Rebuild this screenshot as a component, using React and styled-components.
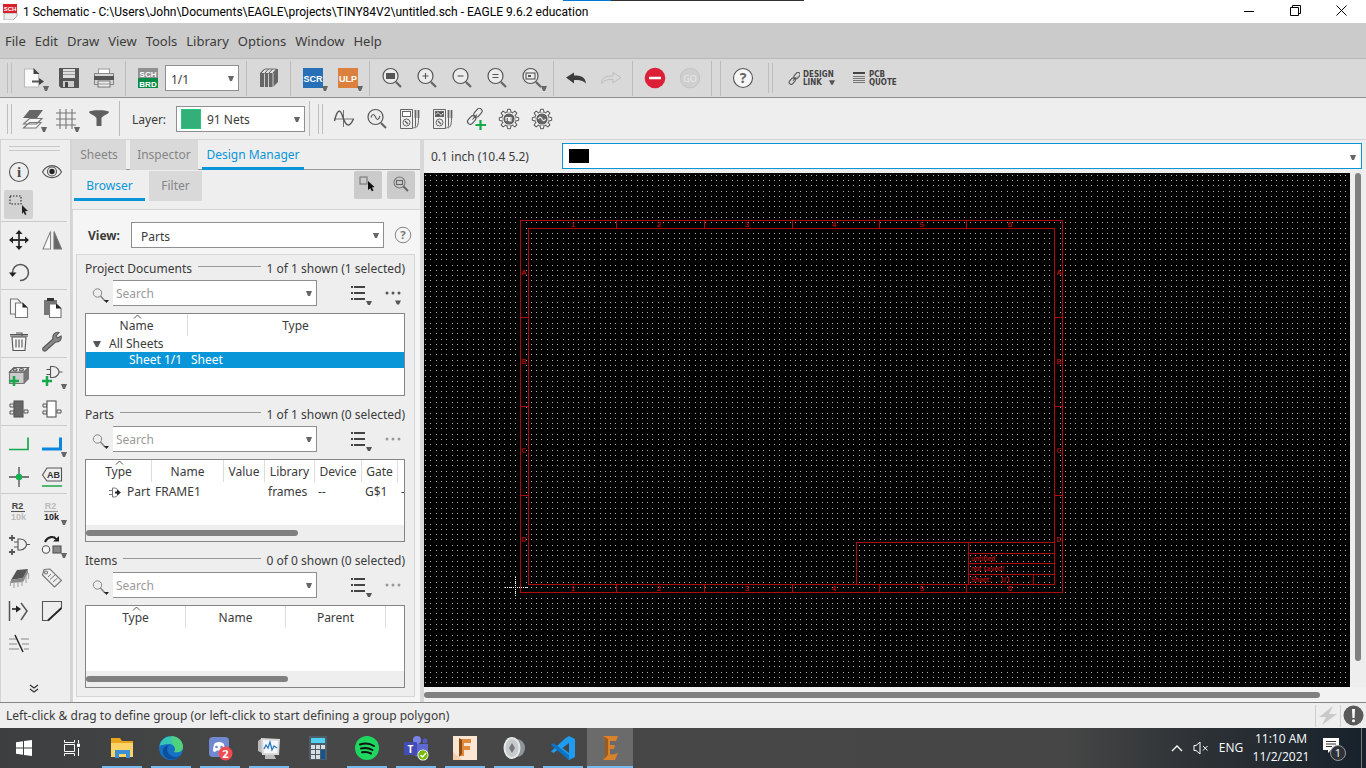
import React from "react";
import styled, { createGlobalStyle, css } from "styled-components";

const UI = `"Noto Sans", "Open Sans", sans-serif`;
const SMALL = "Liberation Sans, sans-serif";
const BLUE = "#0996d9";

const Global = createGlobalStyle`
  * { box-sizing: border-box; }
  body { margin: 0; font-family: ${UI}; font-size: 12px; color: #3b3b3b; background: #eee; overflow: hidden; }
  button, input, select { font: inherit; color: inherit; }
  button { border: 0; padding: 0; background: none; display: flex; align-items: center; justify-content: center; }
  svg { display: block; flex: none; }
  a { color: inherit; text-decoration: none; }
`;

/* ---------- window shell ---------- */
const Shell = styled.div`display: flex; flex-direction: column; height: 100vh; min-height: 700px;`;
const TitleBar = styled.header`
  position: relative; display: flex; align-items: center; height: 23px; flex: none;
  background: #fff; color: #000; padding: 0 2px 0 3px; font-family: Roboto, sans-serif;
`;
const TitleText = styled.span`flex: 1; white-space: nowrap; margin-left: 5px;`;
const WinButton = styled.button`width: 46px; height: 21px; margin-bottom: 2px;`;
const TopStrip = styled.span`
  position: absolute; top: 0; left: 563px; width: 241px; height: 1px;
  background: linear-gradient(90deg, #0078d7 20%, #333 20%);
`;
const MenuBar = styled.nav`
  display: flex; align-items: center; gap: 9px; height: 36px; flex: none; padding: 0 5px;
  background: #cbcbcb; border-bottom: 1px solid #b9b9b9; font-size: 13px; font-family: ${UI};
`;
const MenuItem = styled.button`height: 24px;`;
const ToolBar = styled.div`
  display: flex; align-items: center; flex: none; height: ${(p) => (p.$light ? 42 : 39)}px; padding-left: 7px;
  background: ${(p) => (p.$light ? "#eeeeee" : "#d9d9d9")};
  border-bottom: ${(p) => (p.$light ? "1px solid #d4d4d4" : "1px solid #8f8f8f")};
`;
const Grip = styled.span`
  width: 5px; height: 30px; border: solid #bdbdbd; border-width: 0 1px; margin: 0 ${(p) => p.$after || 4}px 0 ${(p) => p.$before || 0}px;
`;
const Sep = styled.span`
  width: 9px; height: 35px; flex: none; background: linear-gradient(#bcbcbc, #bcbcbc) center / 1px 100% no-repeat;
`;
const ToolButton = styled.button`position: relative; width: ${(p) => p.$w || 35}px; height: 36px; flex: none;`;
const CornerCaret = styled.svg`position: absolute; right: 2px; bottom: 5px;`;
const TextButton = styled.button`
  gap: 3px; margin-right: 17px; font: 700 8px/9px "DejaVu Sans Condensed", "DejaVu Sans", sans-serif; text-align: left; color: #444;
`;
const TextLine = styled.span`display: flex; align-items: center; gap: 7px; height: 8px;`;
const SelectBox = styled.span`
  position: relative; display: block; height: 26px; width: ${(p) => (p.$w ? p.$w + "px" : "auto")};
  flex: ${(p) => (p.$grow ? 1 : "none")}; margin-right: ${(p) => p.$after || 0}px;
`;
const Select = styled.select`
  appearance: none; width: 100%; height: 26px; border: 1px solid #8f8f8f; border-radius: 0; background: #fff;
  padding: 2px 18px 0 ${(p) => p.$pad || 5}px; outline: 0;
`;
const BoxCaret = styled.svg`position: absolute; right: 5px; top: 11px; pointer-events: none;`;
const Swatch = styled.span`position: absolute; left: 5px; top: 3px; width: 20px; height: 20px; background: #33b07a; border: 1px solid #2bc47f;`;
const LayerLabel = styled.label`margin: 2px 10px 0 8px; width: 34px;`;

/* ---------- body ---------- */
const Body = styled.main`display: flex; flex: 1; min-height: 0;`;
const ToolColumn = styled.aside`
  flex: none; width: 72px; border: solid #d4d4d4; border-width: 0 2px 0 1px; padding: 5px 3px 0 0;
  display: flex; flex-direction: column; background: #eee;
`;
const TopGrip = styled.span`height: 5px; margin: 1px 7px 4px 8px; border: solid #c8c8c8; border-width: 1px 0;`;
const ToolGrid = styled.div`
  display: grid; grid-template-columns: 33px 33px; grid-auto-rows: 33px;
  border-bottom: ${(p) => (p.$last ? 0 : "1px solid #cacaca")}; margin-bottom: 1px;
`;
const SideTool = styled.button`
  position: relative; margin: 2px 2px 2px 3px; width: 29px; height: 29px; border-radius: 2px;
  background: ${(p) => (p.$on ? "#d2d2d2" : "none")};
`;
const SideCaret = styled.svg`position: absolute; right: -1px; bottom: 1px;`;
const More = styled.button`margin: auto auto 7px; width: 20px; height: 14px;`;

const Panel = styled.section`
  flex: none; width: 352px; display: flex; flex-direction: column; border-right: 4px solid #d8d8d8;
`;
const Tabs = styled.div`display: flex; height: 30px; gap: 4px; border-bottom: 1px solid #999; flex: none;`;
const SubTabs = styled.div`
  display: flex; height: 40px; gap: 4px; padding: 1px 5px 0 2px; border-bottom: 1px solid #d4d4d4; flex: none;
`;
const Tab = styled.button`
  height: 30px; width: ${(p) => p.$w}px; color: #858585; background: #d9d9d9; padding-bottom: 2px;
  ${(p) => p.$on && css`color: ${BLUE}; background: none; border-bottom: 3px solid ${BLUE}; padding: 1px 0 0;`}
`;
const TabButton = styled.button`
  width: 28px; height: 28px; border-radius: 2px; background: #cbcbcb; margin-left: ${(p) => (p.$first ? "auto" : "1px")};
`;
const PanelBody = styled.div`flex: 1; display: flex; flex-direction: column; padding: 12px 5px 5px 3px; background: #f5f5f5; border-left: 1px solid #d8d8d8; min-height: 0;`;
const ViewRow = styled.div`display: flex; align-items: center; padding: 0 2px 0 12px; flex: none;`;
const ViewLabel = styled.label`font-weight: 700; width: 43px;`;
const RoundHelp = styled.button`width: 20px; height: 20px; margin-left: 9px;`;
const Group = styled.div`flex: 1; margin-top: 6px; border: 1px solid #d6d6d6; background: #eee; padding: 6px 9px 8px 8px;
  display: flex; flex-direction: column; gap: 11px; min-height: 0;`;
const Section = styled.section`display: flex; flex-direction: column; flex: 1; min-height: 0;`;
const SectionTitle = styled.h2`
  display: flex; margin: 0 0 3px; font-size: 12px; font-weight: 400; line-height: 16px; height: 16px; gap: 6px; white-space: nowrap;
`;
const Rule = styled.span`flex: 1; height: 1px; background: #999; margin-top: 5px;`;
const SearchRow = styled.div`display: flex; align-items: center; height: 26px; margin-bottom: 7px; flex: none;`;
const SearchIcon = styled.svg`margin: 6px 1px 0 7px;`;
const SearchBox = styled.span`position: relative; width: 204px; height: 26px;`;
const SearchInput = styled.input`
  width: 100%; height: 26px; border: 1px solid #8f8f8f; border-left: 0; background: #fff; padding: 1px 18px 0 3px; outline: 0;
  &::placeholder { color: #9a9a9a; opacity: 1; }
`;
const RowButton = styled.button`margin-left: ${(p) => p.$gap}px; margin-top: 5px;`;
const TableBox = styled.div`flex: 1; display: flex; flex-direction: column; border: 1px solid #858585; background: #fff; min-height: 0; overflow: hidden;`;
const Table = styled.table`
  table-layout: fixed; width: 100%; border-collapse: separate; border-spacing: 0; white-space: nowrap;
  th { position: relative; font-weight: 400; height: 22px; padding: 0; border-right: 1px solid #ddd; }
  th:last-child { border-right-color: #fff; }
  td { height: 16px; line-height: 16px; padding: 0 0 0 3px; }
`;
const SortMark = styled.svg`position: absolute; top: 0; left: 50%; margin-left: -4px;`;
const PartsBody = styled.tbody`td { height: 20px; line-height: 20px; } td svg { margin: 0 5px 0 20px; }`;
const Row = styled.tr`${(p) => p.$on && css`background: ${BLUE}; color: #fff;`}`;
const TreeCell = styled.td`&& { padding-left: ${(p) => p.$indent}px; }`;
const Line = styled.span`display: flex; align-items: center;`;
const HTrack = styled.div`
  height: 16px; flex: none; margin-top: auto; display: flex; align-items: center; background: #eee;
`;
const HThumb = styled.span`height: 6px; width: ${(p) => p.$w}; border-radius: 3px; background: #808080;`;

const Editor = styled.section`flex: 1; min-width: 0; display: flex; flex-direction: column;`;
const CommandRow = styled.div`display: flex; align-items: center; height: 33px; flex: none; padding: 0 4px 1px 7px;`;
const Coord = styled.label`width: 131px; padding-top: 1px;`;
const Command = styled.span`position: relative; flex: 1; display: flex; align-items: center; height: 26px; border: 1px solid ${BLUE}; background: #fff; padding-left: 6px;`;
const Block = styled.span`width: 20px; height: 14px; background: #000;`;
const CommandInput = styled.input`flex: 1; border: 0; outline: 0; background: none; height: 22px;`;
const CanvasRow = styled.div`flex: 1; display: flex; min-height: 0;`;
const Canvas = styled.div`flex: 1; min-width: 0; background: #000; overflow: hidden;`;
const VTrack = styled.div`width: 16px; flex: none; display: flex; justify-content: center; background: #eee;`;
const VThumb = styled.span`width: 6px; height: 95%; border-radius: 3px; background: #808080;`;
const BottomTrack = styled(HTrack)`height: 15px; padding-right: 16px; background: #f2f2f2;`;

const Status = styled.footer`
  flex: none; height: 26px; border-top: 1px solid #858585; display: flex; align-items: center; padding-left: 6px; background: #eee;
`;
const StatusText = styled.span`flex: 1;`;
const StatusCell = styled.button`width: ${(p) => p.$w}px; height: 22px; border-left: 1px solid #cfcfcf;`;

/* ---------- taskbar ---------- */
const Taskbar = styled.nav`
  flex: none; height: 40px; display: flex; color: #fff; font-family: "Open Sans", sans-serif;
  background: linear-gradient(90deg, #3c3e3f 0%, #474747 18%, #464646 78%, #2c3135 88%, #18222c 100%);
`;
const Task = styled.button`
  width: ${(p) => p.$w || 49}px; height: 40px; position: relative;
  ${(p) => p.$on && css`background: #6b6b6b;`}
  &::after { content: ""; display: ${(p) => (p.$run ? "block" : "none")}; position: absolute; left: ${(p) => (p.$on ? 0 : 5)}px; right: ${(p) => (p.$on ? 0 : 4)}px;
    bottom: 0; height: 2px; background: #76b9ed; }
`;
const Tray = styled.div`margin-left: auto; display: flex; align-items: center;`;
const TrayButton = styled.button`height: 40px; width: ${(p) => p.$w}px; line-height: 18px; white-space: nowrap;`;
const Notice = styled(TrayButton)`margin-right: 6px;`;
const Desk = styled.span`width: 5px; height: 40px; border-left: 1px solid #777;`;

/* ---------- small glyphs ---------- */
const Tri = (p) => <svg width="8" height="6" viewBox="0 0 8 6" {...p}><path d="M0 0h8L5 6H3z" fill="#555" /></svg>;
const TriC = ({ as: C }) => <C width="6" height="5" viewBox="0 0 6 5" aria-hidden="true"><path d="M0 0h6L4 5H2z" fill="#666" /></C>;

const I = ({ s = 22, children, ...p }) => (
  <svg width={s} height={s} viewBox="0 0 22 22" fill="none" stroke="#555" strokeWidth="1.1" aria-hidden="true" {...p}>{children}</svg>
);
const Lens = ({ children }) => (
  <I><circle cx="9.5" cy="9" r="7.5" fill="#ececec" strokeWidth="1.2" /><path d="M15 15l5 5" strokeWidth="2.2" stroke="#666" />{children}</I>
);
const TEETH = [0, 45, 90, 135, 180, 225, 270, 315];
const Gear = ({ d }) => (
  <I>
    <circle cx="11" cy="11" r="7.2" fill="#f3f3f3" strokeWidth="1" />
    {TEETH.map((a) => <path key={a} d="M9 4.300L9.600 1.300h2.800L13 4.300" fill="#f3f3f3" strokeWidth="1" transform={`rotate(${a} 11 11)`} />)}
    <circle cx="11" cy="11" r="5" fill="#666" stroke="#555" />
    <path d={d} stroke="#eee" strokeWidth="1.2" />
  </I>
);
const Meter = ({ dark }) => (
  <I strokeWidth="1" stroke="#666">
    <path d="M1.500 1.500h12v19h-12z" />
    <rect x="3.500" y="3.500" width="8" height="5" fill={dark ? "#555" : "#fff"} />
    {dark && <path d="M4 6.500c2-3 3-1 4 0s2 .5 3-1.500" stroke="#fff" strokeWidth="1" />}
    <circle cx="7.500" cy="14.500" r="3.500" /><path d="M6 13l3 3" strokeWidth="1.500" />
    <path d="M16.500 2v8M19.500 2v8" strokeWidth="1.800" /><path d="M16.500 10v7c0 3-2 3-2.500 3M19.500 10c0 7-1 9-3.500 10" />
  </I>
);
const Gate = ({ x = 0, y = 0 }) => (
  <g transform={`translate(${x} ${y})`}><path d="M4 0h2.500c5 0 6 4.500 6 5.500S11 11 6.500 11H4V0zM0 3h4M0 8h4M12.500 5.500H16" /></g>
);
const Chip = ({ fill }) => (
  <I><path d="M2 6h4v3H2zM2 13h4v3H2zM16 12h4v3h-4z" fill="#eee" strokeWidth="1" /><rect x="6" y="3" width="9" height="16" fill={fill} /></I>
);
const Link = () => (
  <g><rect x="8.500" y="2" width="9.500" height="5.500" rx="2.700" transform="rotate(-48 13 5)" /><rect x="2" y="9" width="9.500" height="5.500" rx="2.700" transform="rotate(-48 7 12)" /><path d="M7.500 11.500l4.500-5" /></g>
);
const Label = ({ x, y, fill, size = 9, children }) => (
  <text x={x} y={y} textAnchor="middle" fontSize={size} fontWeight="700" fontFamily={SMALL} fill={fill} stroke="none">{children}</text>
);

const icons = {
  new: <I><path d="M1.500 2h9l5 5v13h-14z" fill="#fafafa" stroke="#bbb" /><path d="M10.500 1l6 6h-6z" fill="#444" stroke="none" /><path d="M9 14.500h8" strokeWidth="2" /><path d="M16 11l5 3.500-5 3.500z" fill="#444" stroke="none" /></I>,
  save: <I><path d="M1 1h20v20H3l-2-2z" fill="#555" stroke="none" /><path d="M5 2h12v9H5z" fill="#ddd" stroke="none" /><path d="M5 14h11v6H5z" fill="#ccc" stroke="none" /><path d="M7 15h3v5H7z" fill="#444" stroke="none" /><path d="M5 4.500h12M5 7.500h12" stroke="#999" strokeWidth="1" /></I>,
  print: <I><path d="M5.500 7V2h11v5" fill="#fff" stroke="#999" /><path d="M1.500 6.500h19v11h-19z" fill="#d5d5d5" stroke="#888" /><path d="M1 9h20v4H1z" fill="#555" stroke="none" /><path d="M5 14h12v6H5z" fill="#eee" stroke="#777" /><path d="M5 17h12" stroke="#999" /></I>,
  sch: <I><rect x="1" y="1" width="20" height="10" fill="#909090" stroke="none" /><rect x="1" y="11" width="20" height="10" fill="#0a8a48" stroke="none" /><Label x="11" y="9.500" size={8} fill="#fff">SCH</Label><Label x="11" y="19.500" size={8} fill="#fff">BRD</Label></I>,
  books: <I><path d="M2 6l4-4h14v13l-5 5H2z" fill="#666" stroke="none" /><path d="M2.500 6.500h12l4-4.500H7z" fill="#e3e3e3" strokeWidth=".8" /><path d="M6.500 6v14M10.500 6v14M15 6v14" stroke="#ccc" strokeWidth="1" /><path d="M6.500 6.500l4-4.500M10.500 6.500l4-4.500" strokeWidth="1" /></I>,
  scr: <I><rect x="1" y="1" width="20" height="20" fill="#2670b8" stroke="none" /><Label x="11" y="14.500" fill="#fff">SCR</Label></I>,
  ulp: <I><rect x="1" y="1" width="20" height="20" fill="#db813d" stroke="none" /><Label x="11" y="14.500" fill="#fff">ULP</Label></I>,
  zfit: <Lens><rect x="5" y="6" width="9" height="6" fill="#555" stroke="none" /></Lens>,
  zin: <Lens><path d="M6.500 9h6M9.500 6v6" /></Lens>,
  zout: <Lens><path d="M6.500 9h6" /></Lens>,
  zeq: <Lens><path d="M6.500 7.500h6M6.500 10.500h6" /></Lens>,
  zsel: <Lens><rect x="5" y="6" width="9" height="6" /><rect x="7" y="8" width="3" height="2" fill="#555" stroke="none" /></Lens>,
  undo: <I><path d="M1 10.500L9 5.500v3c7 0 11 1 12 8-3-3-6-3.500-12-3.500v3.500z" fill="#3c3c3c" stroke="none" /></I>,
  redo: <I><path d="M21 10.500L13 5.500V9C6 9 2 10 1.500 16.500 4.500 13 7 12.500 13 12.500V16z" stroke="#bdbdbd" strokeWidth="1" /></I>,
  stop: <I><circle cx="11" cy="11" r="10.300" fill="#dc1f37" stroke="none" /><path d="M5 11h12" stroke="#fff" strokeWidth="2.500" /></I>,
  go: <I><circle cx="11" cy="11" r="9.700" fill="#cfcfcf" stroke="#c4c4c4" /><text x="11" y="14.500" textAnchor="middle" fontSize="9" fill="#e8e8e8" stroke="none">GO</text></I>,
  help: <I><circle cx="11" cy="11" r="9.500" fill="#f6f6f6" /><text x="11" y="16" textAnchor="middle" fontSize="14" fontWeight="700" fill="#666" stroke="none">?</text></I>,
  layers: <I><path d="M1.500 20l6-5.500H19l-5 5.500zM1.500 16l6-5.500H20L14.500 16z" fill="#f6f6f6" stroke="#777" /><path d="M1 10l6.500-8H21l-6 8z" fill="#666" stroke="none" /></I>,
  grid: <I><path d="M5 1v20M11 1v20M17 1v20M1 5h20M1 11h20M1 17h20" stroke="#777" /></I>,
  funnel: <I><path d="M1 4c0-2.500 20-2.500 20 0 0 2-7.500 4-7.500 6.500V18h-5v-7.500C8.500 8 1 6 1 4z" fill="#5f5f5f" stroke="none" /></I>,
  sine: <I><path d="M1.500 13C4 2 7 0 9.500 8s6 14 11 3" strokeWidth="1.400" /><path d="M1 11h20M10.500 2v17" strokeWidth=".8" /></I>,
  zsine: <Lens><path d="M5 9.500c1-4 3-4 4.500-.5s3 3.500 4.500-1" /></Lens>,
  meter: <Meter />, scope: <Meter dark />,
  linkadd: <I><Link /><path d="M15.500 12v10M10.500 17h10.500" stroke="#17a84b" strokeWidth="2.200" /></I>,
  gear1: <Gear d="M8 13V9.500h2.500V13M11.500 9v4H13V9" />, gear2: <Gear d="M7.500 11c1-3 2.500-2 3.500 0s2.500 2.500 3.500 0" />,
  info: <I><circle cx="11" cy="11" r="9.500" /><text x="11" y="16" textAnchor="middle" fontSize="15" fontWeight="700" fontFamily="Liberation Serif" fill="#4d4d4d" stroke="none">i</text></I>,
  eye: <I><path d="M1.500 11C6 2.500 16 2.500 20.500 11 16 18.500 6 18.500 1.500 11z" /><circle cx="11" cy="10.500" r="4.500" /><circle cx="11" cy="10.500" r="2.700" fill="#222" stroke="none" /></I>,
  group: <I><rect x="2" y="2" width="11" height="8" strokeDasharray="1.500 1.500" stroke="#222" /><path d="M14 11l6 6-3 .3 1.500 3-1.500.7-1.500-3-1.500 2z" fill="#222" stroke="none" /></I>,
  move: <I><path d="M3 11h16M11 3v16" strokeWidth="1.800" stroke="#333" /><path d="M1 11l4-3.500v7zM21 11l-4-3.500v7zM11 1L7.500 5h7zM11 21l-3.500-4h7z" fill="#222" stroke="none" /></I>,
  mirror: <I><path d="M9.500 2.500V20H2z" fill="#fafafa" stroke="#888" /><path d="M13 2.500V20h7.500z" fill="#666" stroke="#777" /></I>,
  rotate: <I><path d="M4.500 11a8 8 0 1 1 7.500 7.500" strokeWidth="1.500" /><path d="M1 10.500h7.500L4.500 15z" fill="#222" stroke="none" /></I>,
  copy: <I><path d="M2.500 2h7l3 3v12h-10z" fill="#f7f7f7" stroke="#777" /><path d="M7.500 6h7l5 5v9.500h-12z" fill="#fff" stroke="#777" /><path d="M14.500 5.500l5 5h-5z" fill="#222" stroke="none" /></I>,
  paste: <I><path d="M3 3h13v15H3z" fill="#777" stroke="none" /><path d="M6 1h7v3H6z" fill="#333" stroke="none" /><path d="M8.500 7h7l4.500 4.500v9H8.500z" fill="#fff" stroke="#777" /><path d="M15 6.500l5.500 5H15z" fill="#222" stroke="none" /></I>,
  trash: <I><path d="M4 7h14l-1 13.500H5z" fill="#f3f3f3" /><path d="M2 6h18M8 3h6v3M2 4.500h18" /><path d="M8 9.500v8M11 9.500v8M14 9.500v8" /></I>,
  wrench: <I><path d="M2 18L12 9c-1-4 2-7.500 6-6.500l-3 3.500 1.500 2 3.500-2c1 4-2 6.500-5.500 6L5 20.500C3 22 1 20 2 18z" fill="#888" /></I>,
  addpart: <I><path d="M1 7l5-5h15v12l-5 5H1z" fill="#777" stroke="none" /><path d="M1.500 7.500h14.500v11H1.500z" fill="#ccc" stroke="#777" /><path d="M1.500 7l4.500-4.500h14.500L16 7z" fill="#e3e3e3" stroke="#666" /><ellipse cx="7" cy="4.700" rx="2" ry="1.200" /><ellipse cx="13.500" cy="4.700" rx="2" ry="1.200" /><path d="M6 11v10M1 16h10" stroke="#17a84b" strokeWidth="2.500" /></I>,
  addgate: <I><Gate x="5.500" y="1.500" /><path d="M6 11v10M1 16h10" stroke="#17a84b" strokeWidth="2.500" /></I>,
  chipd: <Chip fill="#666" />, chipl: <Chip fill="#fff" />,
  net: <I><path d="M1 16.500h19v-12" stroke="#17a84b" strokeWidth="1.700" /></I>,
  bus: <I><path d="M1 16h18.500V4.500" stroke="#0b86e0" strokeWidth="3" /></I>,
  junction: <I><path d="M1 11h20M11 1v20" stroke="#777" strokeWidth="1.800" /><circle cx="11" cy="11" r="3.200" fill="#12b04e" stroke="none" /></I>,
  label: <I><path d="M1.500 9L6 2h14.500v13H6z" /><Label x="12.500" y="12" fill="#333">AB</Label><path d="M1 20h20" stroke="#17a84b" strokeWidth="1.500" /></I>,
  r2: <I><Label x="9.500" y="8" fill="#444">R2</Label><path d="M3 10.500h14" /><Label x="10.500" y="19" fill="#bbb">10k</Label></I>,
  r2b: <I><Label x="9.500" y="8" fill="#bbb">R2</Label><path d="M3 10.500h14" stroke="#999" /><Label x="10.500" y="19" fill="#222">10k</Label></I>,
  addgates: <I><path d="M4 1v6M1 4h6M4 15v6M1 18h6" strokeWidth="1.800" /><Gate x="6" y="5" /></I>,
  swap: <I><path d="M4 8c3-6 9-6 11-3" strokeWidth="2.200" stroke="#222" /><path d="M12 7.500h6V2z" fill="#222" stroke="none" /><circle cx="5" cy="15.500" r="3.700" fill="#f7f7f7" /><rect x="12" y="12" width="8" height="7" fill="#888" /></I>,
  smash: <I><path d="M9 3l11-1-5 9-12 2z" fill="#555" stroke="none" /><path d="M3 13l12-2 5-9v4l-5 9-12 1z" fill="#888" stroke="none" /><path d="M2.500 14v5M6 16v5M10 15v5M14 14v5M18 9v7M20.500 6v6" stroke="#aaa" strokeWidth="1.200" /></I>,
  tag: <I stroke="#777"><path d="M1.500 8L3 2.500 9 2l11.500 11.500-7 6.500z" /><circle cx="5" cy="5.500" r="1.500" /><path d="M7 10l3-3M9 12.500l5-4.500M12 15l4.500-4" strokeWidth="1" /></I>,
  miter: <I><path d="M1.500 1v20M13 3l6 8-6 9" strokeWidth="1.500" /><path d="M4 9h5" strokeWidth="1.600" stroke="#222" /><path d="M8 5.500l5 3.500-5 3.500z" fill="#222" stroke="none" /></I>,
  split: <I><path d="M7 20.500H1.500v-19h19V8" /><path d="M7 20.500L20.500 8" strokeWidth="1.800" stroke="#222" /></I>,
  optimize: <I><path d="M1 6h7M13 6h8M1 11h8M14 11h7M1 16h10M16 16h5" stroke="#aaa" strokeWidth="1.400" /><path d="M7 2l8 17" stroke="#222" strokeWidth="1.500" /></I>,
};

/* ---------- schematic sheet ---------- */
const PITCH = 5.2865;
let dots = "";
for (let r = -78; r < 120; r++) {
  for (let c = -18; c < 330; c++) {
    const x = Math.round(91 + c * PITCH), y = Math.round(414 + r * PITCH);
    if (x >= 0 && y >= 0) dots += `M${x} ${y}h1v1h-1z`;
  }
}
const Sheet = () => (
  <svg width="100%" height="100%" shapeRendering="crispEdges" role="img" aria-label="Schematic sheet">
    <path d={dots} fill="#b4b4b4" />
    <g fill="none" stroke="#ad0c0c" transform="translate(.5 .5)">
      <path d="M96 47h542v372H96zM104 55h526v356H104z" />
      <path d="M192 47v8M280 47v8M368 47v8M455 47v8M542 47v8M192 411v8M280 411v8M368 411v8M455 411v8M542 411v8" />
      <path d="M96 144h8M96 233h8M96 322h8M630 144h8M630 233h8M630 322h8" />
      <path d="M432 411v-42h198M544 369v42M544 380h86M544 390h86M544 401h86M609 401v10" />
    </g>
    <g fill="#d81010" fontSize="8" fontFamily="Liberation Mono" textAnchor="middle">
      {[149, 235, 323, 410, 498, 586].map((x, i) => (
        <React.Fragment key={x}><text x={x} y="54">{i + 1}</text><text x={x} y="418">{i + 1}</text></React.Fragment>
      ))}
      {["A", "B", "C", "D"].map((t, i) => (
        <React.Fragment key={t}><text x="100" y={102 + i * 89}>{t}</text><text x="635" y={102 + i * 89}>{t}</text></React.Fragment>
      ))}
    </g>
    <g fill="#e01010" fontSize="7" fontFamily="DejaVu Sans Condensed, sans-serif">
      <text x="547" y="388">untitled</text><text x="547" y="398">not saved!</text>
      <text x="547" y="409">Sheet:</text><text x="576" y="409">1/1</text>
    </g>
    <path d="M91.500 404v20M81 414.500h23" stroke="#fff" strokeDasharray="1 1" />
  </svg>
);

/* ---------- composed parts ---------- */
const Tool = ({ n, w, caret, label }) => (
  <ToolButton $w={w} aria-label={label || n}>{icons[n]}{caret && <TriC as={CornerCaret} />}</ToolButton>
);
const Side = ({ n, on, caret }) => <SideTool $on={on} aria-label={n}>{icons[n]}{caret && <TriC as={SideCaret} />}</SideTool>;

const ListSection = ({ title, count, active, children }) => (
  <Section>
    <SectionTitle>{title}<Rule /><span>{count}</span></SectionTitle>
    <SearchRow>
      <SearchIcon width="20" height="16" viewBox="0 0 20 16" fill="none" stroke="#888"><circle cx="5.500" cy="5" r="4.200" /><path d="M8.500 8l4.500 5" strokeWidth="1.600" /><path d="M12 12h5l-2.500 3z" fill="#222" stroke="none" /></SearchIcon>
      <SearchBox><SearchInput type="text" placeholder="Search" aria-label={`Search ${title}`} /><TriC as={BoxCaret} /></SearchBox>
      <RowButton $gap={34} aria-label="List options">
        <svg width="22" height="21" viewBox="0 0 22 21"><path d="M0 2h2M3 2h11M0 8h2M3 8h11M0 14h2M3 14h11" stroke="#444" strokeWidth="2" /><path d="M15 16h6l-2 4h-2z" fill="#555" /></svg>
      </RowButton>
      <RowButton $gap={12} aria-label="More">
        <svg width="18" height="21" viewBox="0 0 18 21" fill={active ? "#555" : "#999"}><circle cx="2" cy="8" r="1.500" /><circle cx="8" cy="8" r="1.500" /><circle cx="14" cy="8" r="1.500" />{active && <path d="M10 15.500h6l-2 4h-2z" />}</svg>
      </RowButton>
    </SearchRow>
    <TableBox>{children}</TableBox>
  </Section>
);
const Head = ({ cols }) => (
  <>
    <colgroup>{cols.map(([t, w]) => <col key={t + w} style={{ width: w }} />)}</colgroup>
    <thead><tr>{cols.map(([t, w], i) => (
      <th key={t + w} scope="col">{i === 0 && <SortMark width="9" height="5" viewBox="0 0 9 5" fill="none" stroke="#555"><path d="M1 4.500l3.500-3.500L8 4.500" /></SortMark>}{t}</th>
    ))}</tr></thead>
  </>
);

const T = ({ children, ...p }) => <svg width="26" height="26" viewBox="0 0 26 26" aria-hidden="true" {...p}>{children}</svg>;
const tasks = [
  ["File Explorer", true, <T><path d="M2 3h9l2 3h11v16H2z" fill="#e9a51d" /><path d="M2 8h22v14H2z" fill="#fcd466" /><path d="M6 23v-8h15v8h-4v-4h-7v4z" fill="#3b8fd6" /></T>],
  ["Edge", true, <T><circle cx="13" cy="13" r="12" fill="#1671c4" /><path d="M1.500 11C4-2 23-2 25 11c.5 5-4 7-9 6 3-3 0-8-5-8-4 0-8 1-9.500 2z" fill="#37c6b5" /><path d="M13 1c7 0 12 5 12 11 0 4-4 6-9 5 2-2 1-5-1-7z" fill="#59d56b" opacity=".75" /><path d="M11 10c-4 4-1 11 5 12 3 .5 6-1 7-2-5 6-16 6-18-2-1-4 2-8 6-8z" fill="#0c4f9e" /></T>],
  ["Discord", true, <T><rect x="2" y="2" width="20" height="20" rx="4" fill="#7189d0" /><path d="M6 16c0-4 1-7 2-8 3-1.500 5-1.500 8 0 1 1 2 4 2 8-3 2-3 0-4-.5h-4C9 16 8 18 6 16z" fill="#fff" /><circle cx="9.500" cy="12" r="1.300" fill="#7189d0" /><circle cx="14.500" cy="12" r="1.300" fill="#7189d0" /><circle cx="18.500" cy="18.500" r="7" fill="#ef4c52" /><text x="18.500" y="22.500" textAnchor="middle" fontSize="11" fontWeight="700" fill="#fff">2</text></T>],
  ["Resource Monitor", true, <T><path d="M2 6l4-3v15l-4-2zM9 20h9l2 4H9z" fill="#bbb" /><path d="M5 3l19 1-1 16H6z" fill="#d8d8d8" /><path d="M7 5l15 1-1 12H8z" fill="#f4f8fc" /><path d="M8 14l2-4 2 3 2-6 2 8 2-4 3 2" fill="none" stroke="#2a79bd" strokeWidth="1.300" /></T>],
  ["Calculator", false, <T><rect x="4" y="1" width="18" height="24" fill="#4c5c68" /><path d="M6 3h14v5H6z" fill="#4ed1f5" /><path d="M6 10h4v4H6zM11 10h4v4h-4zM16 10h4v4h-4zM6 15h4v4H6zM11 15h4v4h-4zM6 20h4v4H6zM11 20h4v4h-4z" fill="#d9dde0" /><path d="M16 15h4v9h-4z" fill="#15558f" /></T>],
  ["Spotify", true, <T><circle cx="13" cy="13" r="12" fill="#1fd65f" /><path d="M6 9.500c5-1.500 10-1 14 1.500M7 13.500c4-1 8-.5 11.500 1.500M8 17.300c3-.8 6-.4 9 1.200" fill="none" stroke="#111" strokeWidth="2" strokeLinecap="round" /></T>],
  ["Teams", true, <T><circle cx="14" cy="5" r="4" fill="#7b83eb" /><circle cx="22" cy="6" r="2.500" fill="#5059c9" /><path d="M10 9h15v8c0 4-4 5-8 5s-7-2-7-6z" fill="#6069d2" /><rect x="1" y="7" width="13" height="13" rx="1" fill="#434cb4" /><text x="7.500" y="17.500" textAnchor="middle" fontSize="10" fontWeight="700" fill="#fff">T</text><circle cx="20" cy="20" r="5.500" fill="#fff" /><circle cx="20" cy="20" r="4.700" fill="#76b900" /><path d="M17.500 20l2 2 3.500-4" fill="none" stroke="#fff" strokeWidth="1.400" /></T>],
  ["Fusion 360", true, <T><rect x="1" y="1" width="24" height="24" fill="#fbe6d3" /><path d="M1 17L10 25H1z" fill="#f5cda8" /><path d="M8 4h11v4h-7v3h6v4h-6v6H8z" fill="#e08a3a" /><path d="M7 3l3 2v14l-3 3z" fill="#8d4b16" /></T>],
  ["Sound", true, <T><ellipse cx="16" cy="13" rx="8" ry="9" fill="#8f9496" /><ellipse cx="11" cy="13" rx="8.500" ry="11" fill="#e4e6e7" /><ellipse cx="11" cy="13" rx="6.500" ry="9" fill="#c6cacc" /><path d="M11 8l3 5-3 5-3-5z" fill="#75797c" /></T>],
  ["VS Code", true, <T><path d="M19 1l6 3v18l-6 3L8 14.500 3.500 18 1 16.500 15 3.500z" fill="#1f9cf0" /><path d="M1 9.500L3.500 8 19 20v5L1 10z" fill="#0a74c2" /><path d="M19 8v10l-6.500-5z" fill="#444" /></T>],
];

export default function App() {
  return (
    <Shell>
      <Global />
      <TitleBar>
        <TopStrip />
        <svg width="15" height="17" viewBox="0 0 15 17"><path d="M1 10h13v3l-4 4H1z" fill="#eee" stroke="#999" strokeWidth=".8" /><rect x="0" y="1" width="14" height="9" fill="#d6202c" /><Label x="7" y="8" size={6} fill="#fff">SCH</Label></svg>
        <TitleText>1 Schematic - C:\Users\John\Documents\EAGLE\projects\TINY84V2\untitled.sch - EAGLE 9.6.2 education</TitleText>
        <WinButton aria-label="Minimize"><svg width="10" height="10"><path d="M0 5.500h10" stroke="#000" /></svg></WinButton>
        <WinButton aria-label="Restore"><svg width="11" height="11" fill="none" stroke="#000"><path d="M.5 2.500h8v8h-8zM2.500 2.500v-2h8v8h-2" /></svg></WinButton>
        <WinButton aria-label="Close"><svg width="11" height="11" stroke="#000"><path d="M.5.5l10 10M10.500.5l-10 10" /></svg></WinButton>
      </TitleBar>
      <MenuBar>
        {["File", "Edit", "Draw", "View", "Tools", "Library", "Options", "Window", "Help"].map((m) => <MenuItem key={m}>{m}</MenuItem>)}
      </MenuBar>
      <ToolBar>
        <Grip />
        <Tool n="new" caret /><Tool n="save" /><Tool n="print" /><Sep />
        <Tool n="sch" />
        <SelectBox $w={74} $after={3}><Select aria-label="Sheet"><option>1/1</option></Select><TriC as={BoxCaret} /></SelectBox>
        <Sep /><Tool n="books" /><Sep />
        <Tool n="scr" caret /><Tool n="ulp" caret /><Sep />
        <Tool n="zfit" /><Tool n="zin" /><Tool n="zout" /><Tool n="zeq" /><Tool n="zsel" caret /><Sep />
        <Tool n="undo" /><Tool n="redo" /><Sep />
        <Tool n="stop" /><Tool n="go" /><Sep /><Sep />
        <Tool n="help" />
        <Grip $before={8} $after={15} />
        <TextButton>
          <svg width="12" height="13" viewBox="1 0 16 17" fill="none" stroke="#555" strokeWidth="1.400"><Link /></svg>
          <span><TextLine>DESIGN</TextLine><TextLine>LINK<Tri width="6" height="5" /></TextLine></span>
        </TextButton>
        <TextButton>
          <svg width="14" height="16" viewBox="0 0 14 16"><path d="M1 2h12v2H1z" fill="#444" /><path d="M1 6.500h12M1 8.500h12M1 10.500h12M1 12.500h12" stroke="#777" /></svg>
          <span><TextLine>PCB</TextLine><TextLine>QUOTE</TextLine></span>
        </TextButton>
      </ToolBar>
      <ToolBar $light>
        <Grip />
        <Tool n="layers" w={33} caret /><Tool n="grid" w={33} caret /><Tool n="funnel" w={33} /><Sep />
        <LayerLabel htmlFor="layer">Layer:</LayerLabel>
        <SelectBox $w={129}><Select id="layer" $pad={30}><option>91 Nets</option></Select><Swatch /><TriC as={BoxCaret} /></SelectBox>
        <Sep /><Grip $before={4} $after={4} />
        {["sine", "zsine", "meter", "scope", "linkadd", "gear1", "gear2"].map((n) => <Tool key={n} n={n} w={33} />)}
      </ToolBar>

      <Body>
        <ToolColumn>
          <TopGrip />
          <ToolGrid><Side n="info" /><Side n="eye" /><Side n="group" on /></ToolGrid>
          <ToolGrid><Side n="move" /><Side n="mirror" /><Side n="rotate" /></ToolGrid>
          <ToolGrid><Side n="copy" /><Side n="paste" /><Side n="trash" /><Side n="wrench" /></ToolGrid>
          <ToolGrid><Side n="addpart" /><Side n="addgate" caret /><Side n="chipd" /><Side n="chipl" /></ToolGrid>
          <ToolGrid><Side n="net" /><Side n="bus" caret /><Side n="junction" /><Side n="label" /></ToolGrid>
          <ToolGrid $last>
            <Side n="r2" /><Side n="r2b" caret /><Side n="addgates" /><Side n="swap" caret /><Side n="smash" /><Side n="tag" />
            <Side n="miter" /><Side n="split" /><Side n="optimize" />
          </ToolGrid>
          <More aria-label="More tools"><svg width="10" height="9" fill="none" stroke="#333" strokeWidth="1.300"><path d="M1 1l4 3 4-3M1 5l4 3 4-3" /></svg></More>
        </ToolColumn>

        <Panel>
          <Tabs><Tab $w={54}>Sheets</Tab><Tab $w={68}>Inspector</Tab><Tab $w={102} $on>Design Manager</Tab></Tabs>
          <SubTabs>
            <Tab $w={71} $on>Browser</Tab><Tab $w={53}>Filter</Tab>
            <TabButton $first aria-label="Select"><I><rect x="3" y="3" width="7" height="7" stroke="#777" /><path d="M11 7l6.500 6-2.500.4 1.500 3-1.700.8-1.500-3L11 16z" fill="#111" stroke="none" /></I></TabButton>
            <TabButton aria-label="Zoom to selection"><I><circle cx="9.500" cy="8.500" r="5.500" stroke="#777" /><rect x="6.500" y="6.500" width="6" height="4" stroke="#666" /><path d="M13.500 12.500l4.500 4.500" strokeWidth="2" stroke="#666" /></I></TabButton>
          </SubTabs>
          <PanelBody>
            <ViewRow>
              <ViewLabel htmlFor="view">View:</ViewLabel>
              <SelectBox $grow><Select id="view" $pad={9}><option>Parts</option></Select><TriC as={BoxCaret} /></SelectBox>
              <RoundHelp aria-label="Help"><I s={18} stroke="#777"><circle cx="11" cy="11" r="9.500" /><text x="11" y="16" textAnchor="middle" fontSize="14" fontWeight="700" fill="#777" stroke="none">?</text></I></RoundHelp>
            </ViewRow>
            <Group>
              <ListSection title="Project Documents" count="1 of 1 shown (1 selected)" active>
                <Table>
                  <Head cols={[["Name", "102px"], ["Type", "auto"]]} />
                  <tbody>
                    <Row><TreeCell $indent={7} colSpan={2}><Line><Tri style={{ marginRight: 8 }} />All Sheets</Line></TreeCell></Row>
                    <Row $on><TreeCell $indent={43}>Sheet 1/1</TreeCell><td>Sheet</td></Row>
                  </tbody>
                </Table>
              </ListSection>
              <ListSection title="Parts" count="1 of 1 shown (0 selected)">
                <Table>
                  <Head cols={[["Type", "66px"], ["Name", "72px"], ["Value", "41px"], ["Library", "50px"], ["Device", "47px"], ["Gate", "36px"], ["", "auto"]]} />
                  <PartsBody>
                    <tr>
                      <td><Line><svg width="13" height="11" viewBox="0 0 13 11" fill="none" stroke="#777"><path d="M3.500 1h2c5 0 5 9 0 9h-2zM0 3.500h3M0 7.500h3" /><path d="M6 5.500h3" stroke="#222" strokeWidth="2" /><path d="M8 2.500l4 3-4 3z" fill="#222" stroke="none" /></svg>Part</Line></td>
                      <td>FRAME1</td><td /><td>frames</td><td>--</td><td>G$1</td><td>-</td>
                    </tr>
                  </PartsBody>
                </Table>
                <HTrack><HThumb $w="66.700%" /></HTrack>
              </ListSection>
              <ListSection title="Items" count="0 of 0 shown (0 selected)">
                <Table><Head cols={[["Type", "100px"], ["Name", "100px"], ["Parent", "100px"], ["", "auto"]]} /></Table>
                <HTrack><HThumb $w="63.500%" /></HTrack>
              </ListSection>
            </Group>
          </PanelBody>
        </Panel>

        <Editor>
          <CommandRow>
            <Coord htmlFor="cmd">0.1 inch (10.4 5.2)</Coord>
            <Command><Block /><CommandInput id="cmd" type="text" /><TriC as={BoxCaret} /></Command>
          </CommandRow>
          <CanvasRow><Canvas><Sheet /></Canvas><VTrack><VThumb /></VTrack></CanvasRow>
          <BottomTrack><HThumb $w="96.800%" /></BottomTrack>
        </Editor>
      </Body>

      <Status>
        <StatusText>Left-click &amp; drag to define group (or left-click to start defining a group polygon)</StatusText>
        <StatusCell $w={25} aria-label="Activity"><svg width="20" height="20"><path d="M15 0L1 11h7l-4 8 15-11h-8z" fill="#c9c9c9" /></svg></StatusCell>
        <StatusCell $w={26} aria-label="Alerts"><svg width="21" height="21"><circle cx="10.500" cy="10.500" r="10" fill="#595959" /><path d="M9 4h3l-.5 9h-2z" fill="#fff" /><circle cx="10.500" cy="15.800" r="1.500" fill="#fff" /></svg></StatusCell>
      </Status>

      <Taskbar>
        <Task $w={48} aria-label="Start"><svg width="16" height="16" fill="#fff"><path d="M0 2.300L7 1.300v6.200H0zM8 1.100L16 0v7.500H8zM0 8.500h7v6.200l-7-1zM8 8.500h8V16l-8-1.100z" /></svg></Task>
        <Task aria-label="Task view"><svg width="17" height="16" fill="none" stroke="#fff"><path d="M.5 0v2.500h10V0M.5 16v-2.500h10V16M.5 4.500h10v7H.5zM14.500 0v3M14.500 8v8" /><path d="M13.500 4h2v2.500h-2z" fill="#fff" /></svg></Task>
        {tasks.map(([name, run, icon]) => <Task key={name} $run={run} aria-label={name}>{icon}</Task>)}
        <Task $w={46} $on $run aria-label="EAGLE"><T><path d="M6 1h15l-2 5h-6v4h5l-1 4h-4v5c3 1 5 0 8-1l-3 7H6l2-4V5z" fill="#d8822c" /><path d="M6 1l5 3v16l-5 5 2-4V5z" fill="#9c5a1e" /></T></Task>
        <Tray>
          <TrayButton $w={24} aria-label="Hidden icons"><svg width="12" height="7" fill="none" stroke="#fff" strokeWidth="1.300"><path d="M1 6l5-5 5 5" /></svg></TrayButton>
          <TrayButton $w={24} aria-label="Volume"><svg width="16" height="14" fill="none" stroke="#fff"><path d="M1 4.500h2L7 1v12L3 9.500H1zM10 5l4.500 4.500M14.500 5L10 9.500" /></svg></TrayButton>
          <TrayButton $w={36}>ENG</TrayButton>
          <TrayButton $w={64}>11:10 AM<br />11/2/2021</TrayButton>
          <Notice $w={42} aria-label="Notifications"><svg width="26" height="26"><path d="M2 3h16v12h-8l-3 3v-3H2z" fill="#fff" /><path d="M5 6.500h10M5 9h10M5 11.500h6" stroke="#333" /><circle cx="17" cy="18" r="7.500" fill="#2d3238" stroke="#999" /><text x="17" y="22" textAnchor="middle" fontSize="11" fill="#fff">1</text></svg></Notice>
          <Desk />
        </Tray>
      </Taskbar>
    </Shell>
  );
}
